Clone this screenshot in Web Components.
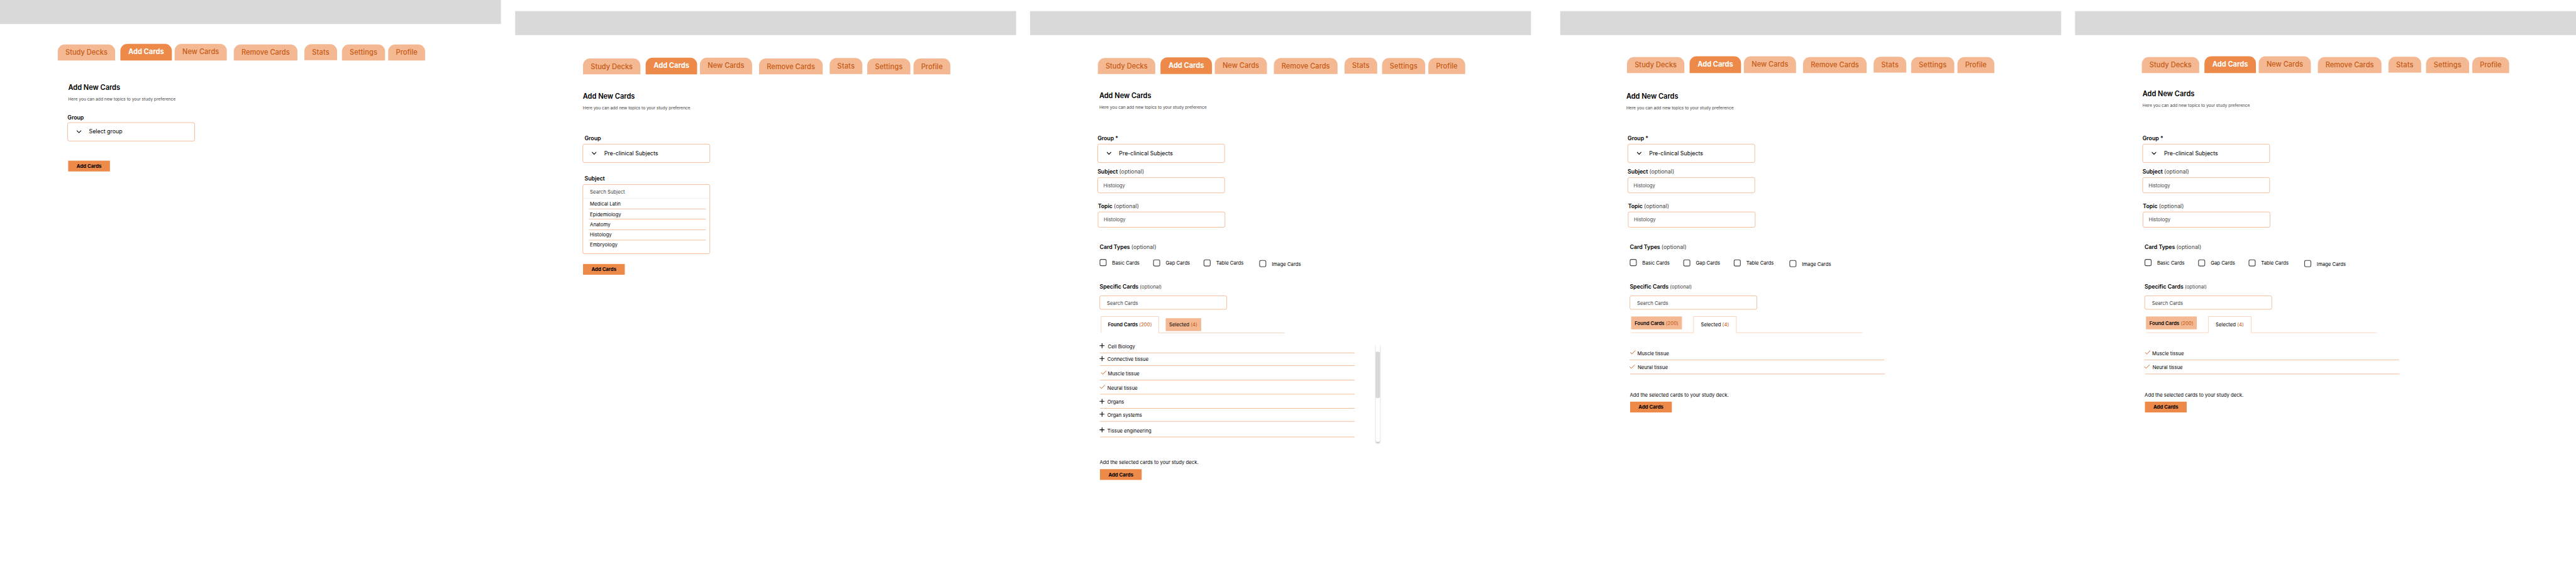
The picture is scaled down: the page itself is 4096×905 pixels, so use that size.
<!DOCTYPE html>
<html lang="en">
<head>
<meta charset="utf-8">
<title>Add New Cards</title>
<style>
  html, body { margin: 0; background: #fff; overflow: hidden; }
  body { width: 4096px; height: 905px; font-family: Inter, "Liberation Sans", sans-serif; color: #000; }
</style>
</head>
<body>
<flow-canvas></flow-canvas>

<template id="t-canvas">
  <style>
    :host { display: block; width: 4096px; height: 905px; overflow: hidden; }
    main { display: flex; align-items: flex-start; width: 7405px; height: 1636px; transform: scale(.55313); transform-origin: 0 0; }
    .form { display: block; margin-left: 194px; }
    .list { display: flex; align-items: flex-start; height: 270px; margin: 29px 0 0 7px; }
    .rows { width: 732px; }
  </style>
  <main>
  <study-board>
    <nav-tabs style="margin:57px 0 0 166px"></nav-tabs>
    <page-heading style="margin:64.7px 0 0 196px"></page-heading>
    <div class="form">
      <field-label style="margin-top:36.2px">Group</field-label>
      <select-box style="margin-top:4.3px">Select group</select-box>
      <add-button style="margin:56px 0 0 2px"></add-button>
    </div>
  </study-board>

  <study-board style="margin:32px 0 0 41px">
    <nav-tabs style="margin:65px 0 0 195px"></nav-tabs>
    <page-heading style="margin:50.7px 0 0 194.5px"></page-heading>
    <div class="form">
      <field-label style="margin:69.6px 0 0 5.5px">Group</field-label>
      <select-box style="margin-top:7px">Pre-clinical Subjects</select-box>
      <field-label style="margin:36px 0 0 5.5px">Subject</field-label>
      <option-list style="margin-top:7px"></option-list>
      <add-button style="margin:29px 0 0 1px"></add-button>
    </div>
  </study-board>

  <study-board style="margin:32px 0 0 40px">
    <nav-tabs style="margin:64px 0 0 195px"></nav-tabs>
    <page-heading style="margin:49.7px 0 0 199px"></page-heading>
    <div class="form">
      <card-filters style="margin-top:71.3px"></card-filters>
      <card-tabs current="found" style="margin:20px 0 0 10px"></card-tabs>
      <div class="list">
        <div class="rows">
          <card-row icon="plus" style="--text:22.8px">Cell Biology</card-row>
          <card-row icon="plus" style="margin-top:9px">Connective tissue</card-row>
          <card-row icon="check" style="margin-top:13px;--icon:2.5px;--text:22.5px">Muscle tissue</card-row>
          <card-row icon="check" style="margin-top:13px">Neural tissue</card-row>
          <card-row icon="plus" style="margin-top:13px">Organs</card-row>
          <card-row icon="plus" style="margin-top:9px">Organ systems</card-row>
          <card-row icon="plus" style="margin-top:17px">Tissue engineering</card-row>
        </div>
        <scroll-track style="margin:1px 0 0 61px"></scroll-track>
      </div>
      <small-text style="margin:63.4px 0 0 6px">Add the selected cards to your study deck.</small-text>
      <add-button style="margin:11.6px 0 0 7px"></add-button>
    </div>
  </study-board>

  <study-board style="margin:32px 0 0 84px">
    <nav-tabs style="margin:61px 0 0 192px"></nav-tabs>
    <page-heading style="margin:53.7px 0 0 190px"></page-heading>
    <div class="form">
      <card-filters style="margin-top:70.3px"></card-filters>
      <card-tabs current="selected" style="margin:20px 0 0 10px"></card-tabs>
      <div class="rows" style="margin:50px 0 0 5px">
        <card-row icon="check" style="--icon:1.8px;--text:22.8px">Muscle tissue</card-row>
        <card-row icon="check" style="margin:13px 0 0 2px;width:732px;--icon:-2px;--text:21.8px">Neural tissue</card-row>
      </div>
      <small-text style="margin:50.4px 0 0 6px">Add the selected cards to your study deck.</small-text>
      <add-button style="margin:11.6px 0 0 7px"></add-button>
    </div>
  </study-board>

  <study-board style="margin:32px 0 0 40px">
    <nav-tabs style="margin:61px 0 0 192px"></nav-tabs>
    <page-heading style="margin:46.7px 0 0 194px"></page-heading>
    <div class="form">
      <card-filters style="margin-top:77.3px"></card-filters>
      <card-tabs current="selected" style="margin:20px 0 0 10px"></card-tabs>
      <div class="rows" style="margin:50px 0 0 5px">
        <card-row icon="check" style="--icon:1.8px;--text:22.8px">Muscle tissue</card-row>
        <card-row icon="check" style="margin:13px 0 0 2px;width:732px;--icon:-2px;--text:21.8px">Neural tissue</card-row>
      </div>
      <small-text style="margin:50.4px 0 0 6px">Add the selected cards to your study deck.</small-text>
      <add-button style="margin:11.6px 0 0 7px"></add-button>
    </div>
  </study-board>
  </main>
</template>

<template id="t-board">
  <style>
    :host { display: flex; flex-direction: column; flex: none; width: 1440px; }
    header { height: 69px; background: #d9d9d9; }
  </style>
  <header></header>
  <slot></slot>
</template>

<template id="t-tabs">
  <style>
    :host { display: flex; align-items: flex-start; height: 48px; }
  </style>
  <nav-tab style="width:165px;margin-top:2px">Study Decks</nav-tab>
  <nav-tab active style="width:148px;height:48px;margin-left:15px">Add Cards</nav-tab>
  <nav-tab style="width:150px;height:48px;margin-left:8px">New Cards</nav-tab>
  <nav-tab style="width:183px;margin:2px 0 0 20px">Remove Cards</nav-tab>
  <nav-tab style="width:94px;margin:1px 0 0 20px;letter-spacing:.3px">Stats</nav-tab>
  <nav-tab style="width:124px;margin:2px 0 0 14px;letter-spacing:.25px">Settings</nav-tab>
  <nav-tab style="width:106px;margin:2px 0 0 9px">Profile</nav-tab>
</template>

<template id="t-tab">
  <style>
    :host { display: block; flex: none; box-sizing: border-box; height: 46px; padding-top: 11px; border-radius: 20px 20px 0 0;
      background: #f4b993; color: #c65a15; font-size: 20px; font-weight: 500; line-height: 24px; text-align: center; white-space: nowrap; }
    :host([active]) { background: #ed8a49; color: #fff; font-weight: 700; }
  </style>
  <slot></slot>
</template>

<template id="t-heading">
  <style>
    :host { display: block; white-space: nowrap; }
    h1 { margin: 0; font-size: 20px; font-weight: 600; line-height: 24px; letter-spacing: -.05px; }
    p { margin: 14.7px 0 0; font-size: 12px; line-height: 15px; color: #434343; }
  </style>
  <h1>Add New Cards</h1>
  <p>Here you can add new topics to your study preference</p>
</template>

<template id="t-label">
  <style>
    :host { display: block; height: 19px; font-size: 16px; font-weight: 600; line-height: 19px; letter-spacing: -.1px; white-space: nowrap; }
    span { font-weight: 400; color: #434343; letter-spacing: 0; }
    :host([small]) span { font-size: 14px; }
  </style>
  <slot></slot>
</template>

<template id="t-select">
  <style>
    :host { display: flex; align-items: center; box-sizing: border-box; width: 366px; height: 54px; border: 1px solid #ed8a49; border-radius: 5px;
      padding-left: 25px; font-size: 16px; line-height: 19px; white-space: nowrap; }
    svg { flex: none; width: 14px; height: 10px; margin-right: 21.8px; }
  </style>
  <svg viewBox="0 0 14 10"><path d="M.8 1.4 7 7.6l6.2-6.2" fill="none" stroke="#000" stroke-width="2"/></svg>
  <slot></slot>
</template>

<template id="t-input">
  <style>
    :host { display: block; box-sizing: border-box; width: 366px; height: 45px; padding: 13.4px 0 0 16px; border: 1px solid #ed8a49; border-radius: 5px;
      font-size: 14px; line-height: 17px; color: #434343; white-space: nowrap; }
  </style>
  <slot></slot>
</template>

<template id="t-options">
  <style>
    :host { display: block; box-sizing: border-box; width: 366px; height: 200px; border: 1px solid #ed8a49; border-radius: 5px; font-size: 14px; line-height: 17px; }
    .search { box-sizing: border-box; height: 40px; padding: 11.4px 0 0 20px; border-bottom: 1px solid #e3e3e3; color: #434343; }
    ul { list-style: none; margin: 0 0 0 17px; padding: 0; width: 336px; }
    li { box-sizing: border-box; height: 30px; padding-left: 3px; border-bottom: 1px solid #ed8a49; }
    li:nth-child(1) { padding-top: 7.4px; }
    li:nth-child(2) { padding-top: 6.7px; }
    li:nth-child(3) { padding-top: 5.4px; }
    li:nth-child(4) { padding-top: 4.4px; }
    li:nth-child(5) { padding-top: 3.5px; border: 0; }
  </style>
  <div class="search">Search Subject</div>
  <ul><li>Medical Latin</li><li>Epidemiology</li><li>Anatomy</li><li>Histology</li><li>Embryology</li></ul>
</template>

<template id="t-filters">
  <style>
    :host { display: block; }
    .types { display: grid; grid-template-columns: 154px 145px 160px auto; align-items: start; height: 23px; margin: 25.3px 0 0 6px; }
  </style>
  <field-label>Group *</field-label>
  <select-box style="margin-top:7.3px">Pre-clinical Subjects</select-box>
  <field-label optional style="margin-top:16px">Subject</field-label>
  <text-input style="margin-top:7px">Histology</text-input>
  <field-label optional style="margin:27.7px 0 0 1px">Topic</field-label>
  <text-input style="margin:7.3px 0 0 1px">Histology</text-input>
  <field-label optional style="margin:46.7px 0 0 6px">Card Types</field-label>
  <div class="types">
    <check-item>Basic Cards</check-item>
    <check-item style="margin-top:1px">Gap Cards</check-item>
    <check-item style="margin-top:1px">Table Cards</check-item>
    <check-item style="margin-top:3px">Image Cards</check-item>
  </div>
  <field-label optional small style="margin:46.7px 0 0 6px">Specific Cards</field-label>
  <text-input style="margin:16.3px 0 0 6px;height:40px;padding:11.4px 0 0 20px">Search Cards</text-input>
</template>

<template id="t-check">
  <style>
    :host { display: flex; align-items: flex-start; font-size: 14px; line-height: 17px; white-space: nowrap; }
    i { flex: none; box-sizing: border-box; width: 20px; height: 20px; margin-right: 16px; border: 2px solid #434343; border-radius: 5px; }
    span { padding-top: 2.4px; }
  </style>
  <i></i><span><slot></slot></span>
</template>

<template id="t-cardtabs">
  <style>
    :host { display: flex; align-items: flex-start; height: 47px; font-size: 14px; line-height: 17px; white-space: nowrap; }
    div { box-sizing: border-box; flex: none; }
    b { font-weight: 600; }
    span { color: #c65a15; }
    .found, .selected { height: 37px; padding: 10px 0 0 10px; background: #f4b993; }
    .found { width: 146px; }
    .selected { width: 102px; }
    .rest { width: 362px; height: 47px; border-bottom: 1px solid #f4b993; }
    .pre { width: 179px; height: 47px; border-bottom: 1px solid #f4b993; }
    :host([current=found]) { height: 48px; }
    :host([current=found]) .pre { display: contents; }
    :host([current=found]) .found { width: 166px; height: 47px; padding: 14.4px 0 0 19px; background: none; border: 1px solid #f4b993; border-bottom: 0; }
    :host([current=found]) .rest { width: 363px; height: 48px; margin-left: -1px; padding: 5px 0 0 21px; }
    :host([current=found]) .selected { padding-top: 10.4px; }
    :host([current=selected]) .selected { width: 124px; height: 47px; padding: 14.4px 0 0 20.3px; background: none; border: 1px solid #f4b993; border-bottom: 0; }
  </style>
  <div class="pre"><div class="found"><b>Found Cards</b> <span>(200)</span></div></div>
</template>

<template id="t-row">
  <style>
    :host { display: grid; grid-template-columns: 0 auto; box-sizing: border-box; height: 28px; border-bottom: 1px solid #ed8a49; font-size: 14px; line-height: 17px; white-space: nowrap; }
    svg { width: 16px; height: 16px; overflow: visible; margin-left: var(--icon, -1px); fill: none; }
    span { margin: -.4px 0 0 var(--text, 21.4px); }
  </style>
  <svg viewBox="0 0 16 16"></svg><span><slot></slot></span>
</template>

<template id="t-small">
  <style>:host { display: block; font-size: 14px; line-height: 17px; white-space: nowrap; }</style>
  <slot></slot>
</template>

<template id="t-button">
  <style>
    :host { display: block; box-sizing: border-box; width: 120px; height: 31px; padding-top: 7.4px; background: #ed8a49; font-size: 14px; font-weight: 700; line-height: 17px; text-align: center; white-space: nowrap; }
  </style>
  Add Cards
</template>

<template id="t-scroll">
  <style>
    :host { display: block; box-sizing: border-box; flex: none; width: 12px; height: 283px; padding-top: 23px; border-radius: 6px; background: #fff; box-shadow: 0 4px 4px rgba(0,0,0,.25); }
    div { width: 13px; height: 134px; margin-left: -1px; border-radius: 6px; background: #d9d9d9; }
  </style>
  <div></div>
</template>

<script>
  // Registers an element whose shadow root is cloned from the template with the given id.
  const define = (tag, id, setup) => customElements.define(tag, class extends HTMLElement {
    constructor() {
      super();
      this.attachShadow({ mode: 'open' }).append(document.getElementById(id).content.cloneNode(true));
    }
    connectedCallback() { if (setup && !this.ready) { this.ready = true; setup(this, this.shadowRoot); } }
  });

  define('nav-tab', 't-tab');
  define('nav-tabs', 't-tabs');
  define('page-heading', 't-heading');
  define('field-label', 't-label', (el, root) => {
    if (el.hasAttribute('optional')) {
      root.append(' ');
      const note = document.createElement('span');
      note.textContent = '(optional)';
      root.append(note);
    }
  });
  define('select-box', 't-select');
  define('text-input', 't-input');
  define('option-list', 't-options');
  define('check-item', 't-check');
  define('card-filters', 't-filters');
  define('card-tabs', 't-cardtabs', (el, root) => {
    const selected = '<div class="selected">Selected <span>(4)</span></div>';
    // The baseline of the inactive area runs under the filled tab, but not under the outlined one.
    root.querySelector('.pre').insertAdjacentHTML('afterend', el.getAttribute('current') === 'found'
      ? `<div class="rest">${selected}</div>`
      : `${selected}<div class="rest"></div>`);
  });
  define('card-row', 't-row', (el, root) => {
    root.querySelector('svg').innerHTML = el.getAttribute('icon') === 'plus'
      ? '<path d="M0 7h14M7 0v14" stroke="#000" stroke-width="2"/>'
      : '<path d="M.6 6.6 5.3 10.8 15.4 1.2" stroke="#c65a15" stroke-width="1.7"/>';
  });
  define('small-text', 't-small');
  define('add-button', 't-button');
  define('scroll-track', 't-scroll');
  define('study-board', 't-board');
  define('flow-canvas', 't-canvas');
</script>
</body>
</html>
